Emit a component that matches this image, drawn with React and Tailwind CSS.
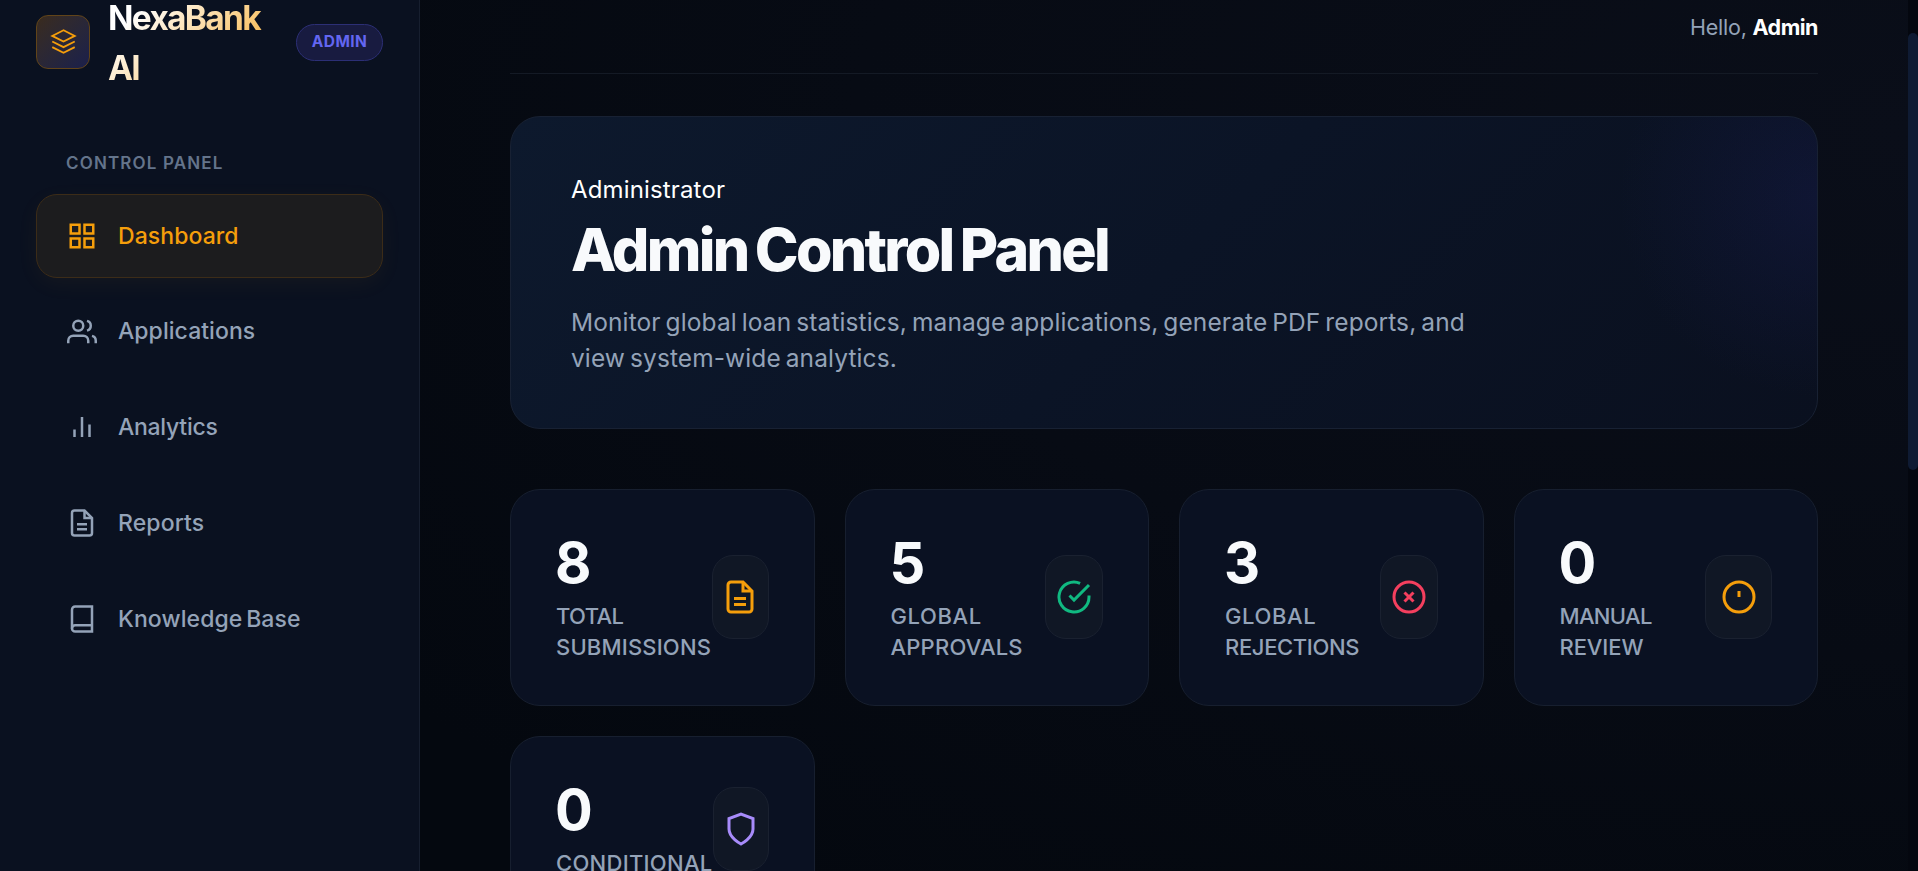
function Icon({ size, stroke = 2, children }) {
  return (
    <svg width={size} height={size} viewBox="0 0 24 24" fill="none" stroke="currentColor" strokeWidth={stroke} className="shrink-0">
      {children}
    </svg>
  );
}

const icons = {
  layers: <><polygon points="12 2 2 7 12 12 22 7 12 2" /><polyline points="2 17 12 22 22 17" /><polyline points="2 12 12 17 22 12" /></>,
  grid: <><rect x="3" y="3" width="7" height="7" /><rect x="14" y="3" width="7" height="7" /><rect x="14" y="14" width="7" height="7" /><rect x="3" y="14" width="7" height="7" /></>,
  users: <><path d="M17 21v-2a4 4 0 0 0-4-4H5a4 4 0 0 0-4 4v2" /><circle cx="9" cy="7" r="4" /><path d="M23 21v-2a4 4 0 0 0-3-3.87" /><path d="M16 3.13a4 4 0 0 1 0 7.75" /></>,
  bars: <><line x1="18" y1="20" x2="18" y2="10" /><line x1="12" y1="20" x2="12" y2="4" /><line x1="6" y1="20" x2="6" y2="14" /></>,
  file: <><path d="M14 2H6a2 2 0 0 0-2 2v16a2 2 0 0 0 2 2h12a2 2 0 0 0 2-2V8z" /><polyline points="14 2 14 8 20 8" /><line x1="16" y1="13" x2="8" y2="13" /><line x1="16" y1="17" x2="8" y2="17" /></>,
  book: <><path d="M4 19.5A2.5 2.5 0 0 1 6.5 17H20" /><path d="M6.5 2H20v20H6.5A2.5 2.5 0 0 1 4 19.5v-15A2.5 2.5 0 0 1 6.5 2z" /></>,
  check: <><path d="M22 11.08V12a10 10 0 1 1-5.93-9.14" /><polyline points="22 4 12 14.01 9 11.01" /></>,
  cross: <><circle cx="12" cy="12" r="10" /><line x1="15" y1="9" x2="9" y2="15" /><line x1="9" y1="9" x2="15" y2="15" /></>,
  alert: <><circle cx="12" cy="12" r="10" /><line x1="12" y1="8" x2="12" y2="12" /></>,
  shield: <path d="M12 22s8-4 8-10V5l-8-3-8 3v7c0 6 8 10 8 10z" />,
};

const nav = [
  { label: "Dashboard", icon: "grid", active: true, track: "tracking-[0.08px]" },
  { label: "Applications", icon: "users", track: "tracking-[0.05px]" },
  { label: "Analytics", icon: "bars", track: "tracking-[-0.28px]" },
  { label: "Reports", icon: "file", track: "tracking-[0.12px]" },
  { label: "Knowledge Base", icon: "book", track: "tracking-[0.1px] [word-spacing:-2.5px]" },
];

const stats = [
  { value: "8", lines: [["TOTAL", "tracking-[-0.6px]"], ["SUBMISSIONS", "tracking-[0.18px]"]], icon: "file", color: "text-[#f59e0b]", box: "w-[57px] -mt-[2px]" },
  { value: "5", lines: [["GLOBAL", "tracking-[0.6px]"], ["APPROVALS", "tracking-[0.2px]"]], icon: "check", color: "text-[#10b981]", box: "w-[58px] -mt-[2px]" },
  { value: "3", lines: [["GLOBAL", "tracking-[0.6px]"], ["REJECTIONS", "tracking-[-0.35px]"]], icon: "cross", color: "text-[#f43f5e]", box: "w-[58px] -mt-[2px]" },
  { value: "0", lines: [["MANUAL", "tracking-[-0.65px]"], ["REVIEW", "tracking-[-0.1px]"]], icon: "alert", color: "text-[#f59e0b]", box: "w-[67px] -mt-[2px]" },
  { value: "0", lines: [["CONDITIONAL", "tracking-[0.28px]"], ["APPROVALS", "tracking-[0.2px]"]], icon: "shield", color: "text-[#a78bfa]", box: "w-[56px] -mt-[32px]" },
];

export default function App() {
  return (
    <div className="flex h-[871px] w-full overflow-hidden bg-[#04080f] font-['Inter',sans-serif]">
      <aside className="flex w-[420px] shrink-0 flex-col border-r border-[#171f2f] bg-[#0a1120] px-9">
        <div className="-mt-2 flex h-[100px] items-center">
          <div className="flex size-[54px] shrink-0 items-center justify-center rounded-[12px] border border-[#614419] bg-linear-to-br from-[#3a2b1d] to-[#1b1f4b] pb-px text-[#f59e0b]">
            <Icon size={27} stroke={1.6}>{icons.layers}</Icon>
          </div>
          <div className="ml-[18px] w-[188px]">
            <div className="w-[170px] bg-[linear-gradient(135deg,#ffffff_18%,#f59e0b_100%)] bg-clip-text pt-[2px] text-[33.5px] leading-[50px] font-bold tracking-[-1.7px] text-transparent">NexaBank AI</div>
          </div>
          <div className="flex h-[37px] w-[87px] shrink-0 items-center justify-center rounded-full border border-[#2c2f75] bg-[#181b40] text-[15.5px] font-bold tracking-[0.4px] text-[#6366f1]">ADMIN</div>
        </div>
        <div className="mt-[58px] h-[26px] pl-[30px] text-[17px] leading-[26px] font-semibold tracking-[1.15px] text-[#64748b]">CONTROL PANEL</div>
        <nav className="mt-[18px] flex flex-col gap-3">
          {nav.map((n) => (
            <div key={n.label} className={"flex h-[83.8px] items-center gap-[21px] rounded-[21px] border pl-[30px] text-[23px] font-medium " + n.track + (n.active ? " border-[#3c2c18] bg-[#1c1c1e] text-[#f59e0b] shadow-[0_6px_22px_rgba(245,158,11,0.05)]" : " border-transparent text-[#94a3b8]")}>
              <Icon size={30}>{icons[n.icon]}</Icon>
              <span>{n.label}</span>
            </div>
          ))}
        </nav>
      </aside>

      <main className="flex min-w-0 flex-1 flex-col bg-[radial-gradient(ellipse_at_100%_15%,#0a0e19_0%,#070b14_50%,#04080f_90%)] px-[90px]">
        <header className="flex h-[74px] shrink-0 justify-end border-b border-[#141a25] pt-[9px] text-[21.5px] leading-[36px] text-[#94a3b8]">
          <div className="tracking-[-0.2px]">Hello, <span className="font-bold tracking-[-0.5px] text-white">Admin</span></div>
        </header>

        <section className="mt-[42px] h-[313px] w-[1308px] shrink-0 rounded-[30px] border border-[#182133] bg-[radial-gradient(circle_at_1308px_80px,rgba(32,36,110,0.24)_0%,rgba(32,36,110,0)_200px),linear-gradient(135deg,#0d192d_0%,#0b1426_50%,#0a101f_100%)] px-[60px] pt-[55px]">
          <div className="text-[24px] leading-[36px] tracking-[0.15px] text-white">Administrator</div>
          <h1 className="mt-[6px] text-[59px] leading-[72px] font-extrabold tracking-[-2.7px] [word-spacing:-3px] text-[#f8fafc]">Admin Control Panel</h1>
          <p className="mt-[18px] text-[24.5px] leading-[36px] tracking-[0.1px] [word-spacing:-2px] whitespace-nowrap text-[#94a3b8]">Monitor global loan statistics, manage applications, generate PDF reports, and<br />view system-wide analytics.</p>
        </section>

        <div className="mt-[60px] grid w-[1308px] grid-cols-4 gap-[30px]">
          {stats.map((s, i) => (
            <div key={i} className="flex h-[217px] items-center justify-between rounded-[30px] border border-[#171f2f] bg-[#0a1122] px-[45px]">
              <div>
                <div className="-ml-px text-[56px] leading-[60px] font-bold text-[#f8fafc]">{s.value}</div>
                <div className="mt-[8px] text-[22px] leading-[31px] font-medium text-[#94a3b8]">
                  {s.lines.map(([text, track]) => <div key={text} className={track}>{text}</div>)}
                </div>
              </div>
              <div className={"-ml-4 flex h-[84px] shrink-0 items-center justify-center rounded-[21px] border border-[#1a2130] bg-[#101725] " + s.box + " " + s.color}>
                <Icon size={36}>{icons[s.icon]}</Icon>
              </div>
            </div>
          ))}
        </div>
      </main>
      <div className="w-[10px] shrink-0 bg-[#04070f] pt-[33px]">
        <div className="h-[437px] rounded-full bg-[#0f1b33]" />
      </div>
    </div>
  );
}
